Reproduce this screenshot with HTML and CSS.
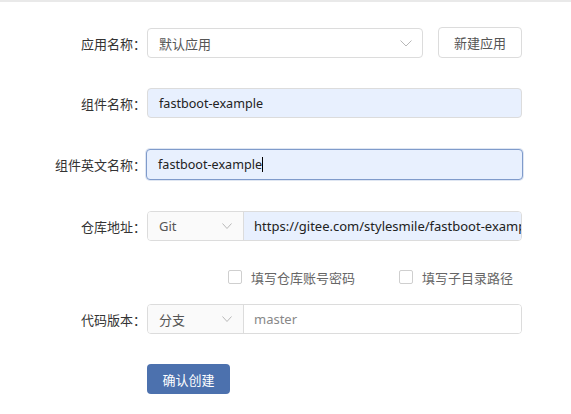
FILE: index.html
```html
<!DOCTYPE html>
<html lang="zh">
<head>
<meta charset="utf-8">
<link rel="stylesheet" href="styles.css">
</head>
<body>
<div class="page">
  <form class="form">
    <div class="row r1">
      <label class="label">应用名称：</label>
      <div class="select wide">
        <span class="sel-text">默认应用</span>
        <svg class="arrow" width="12" height="7" viewBox="0 0 12 7"><path d="M0.5 0.5 L6 6 L11.5 0.5" fill="none" stroke="#b8b8b8" stroke-width="1"/></svg>
      </div>
      <button type="button" class="btn">新建应用</button>
    </div>
    <div class="row r2">
      <label class="label">组件名称：</label>
      <div class="input filled">fastboot-example</div>
    </div>
    <div class="row r3">
      <label class="label">组件英文名称：</label>
      <div class="input filled focus">fastboot-example<span class="caret"></span></div>
    </div>
    <div class="row r4">
      <label class="label">仓库地址：</label>
      <div class="group">
        <div class="select small">
          <span class="sel-text">Git</span>
          <svg class="arrow" width="10" height="6" viewBox="0 0 10 6"><path d="M0.5 0.5 L5 5.5 L9.5 0.5" fill="none" stroke="#b8b8b8" stroke-width="1"/></svg>
        </div>
        <div class="gin filled"><span class="clip">https://gitee.com/stylesmile/fastboot-example</span></div>
      </div>
    </div>
    <div class="row checks">
      <label class="check"><span class="box"></span>填写仓库账号密码</label>
      <label class="check"><span class="box"></span>填写子目录路径</label>
    </div>
    <div class="row r6">
      <label class="label">代码版本：</label>
      <div class="group">
        <div class="select small">
          <span class="sel-text">分支</span>
          <svg class="arrow" width="10" height="6" viewBox="0 0 10 6"><path d="M0.5 0.5 L5 5.5 L9.5 0.5" fill="none" stroke="#b8b8b8" stroke-width="1"/></svg>
        </div>
        <div class="gin plain">master</div>
      </div>
    </div>
    <div class="row r7">
      <span class="label"></span>
      <button type="button" class="primary">确认创建</button>
    </div>
  </form>
</div>
</body>
</html>
```
FILE: styles.css
```css
* { box-sizing: border-box; }
html, body { margin: 0; padding: 0; background: #fff; }
body {
  font-family: "Noto Sans", "Noto Sans CJK SC", sans-serif;
  font-size: 13px;
  color: #333;
}
.page {
  border-top: 2px solid #e9e9e9;
  padding-top: 26px;
  width: 571px;
  height: 414px;
}
.form { display: flex; flex-direction: column; }
.row { display: flex; align-items: center; height: 30px; }
.r1 { margin-bottom: 30px; }
.r2 { margin-bottom: 31px; }
.r3 { margin-bottom: 32px; }
.r4 { margin-bottom: 26px; }
.checks { height: 20px; margin-bottom: 17px; padding-left: 228px; }
.r6 { margin-bottom: 30px; }

.label {
  width: 147px;
  flex: none;
  text-align: right;
  padding-right: 1px;
  color: #333;
  white-space: nowrap;
}
.select {
  display: flex;
  align-items: center;
  justify-content: space-between;
  height: 30px;
  border: 1px solid #dcdcdc;
  border-radius: 4px;
  padding: 0 10px 0 11px;
  color: #555;
  background: #fff;
}
.select.wide { width: 276px; }
.arrow { display: block; }
.btn {
  margin-left: 15px;
  width: 84px;
  height: 31px;
  margin-top: -1px;
  border: 1px solid #dcdcdc;
  border-radius: 4px;
  background: #fff;
  color: #555;
  font: inherit;
  padding: 0;
}
.input {
  width: 375px;
  height: 30px;
  border: 1px solid #dcdcdc;
  border-radius: 4px;
  padding: 0 11px;
  display: flex;
  align-items: center;
  color: #222;
  font-size: 12.6px;
}
.filled { background: #e8f0fe; }
.input.focus {
  width: 377px;
  margin-left: -1px;
  height: 31px;
  border-color: #7f9bcb;
  box-shadow: 0 0 0 1px rgba(127,155,203,0.25);
}
.caret {
  display: inline-block;
  width: 1px;
  height: 15px;
  background: #000;
}
.group {
  display: flex;
  width: 375px;
  height: 30px;
  border: 1px solid #dcdcdc;
  border-radius: 4px;
  overflow: hidden;
}
.select.small {
  width: 96px;
  height: 28px;
  border: none;
  border-right: 1px solid #dcdcdc;
  border-radius: 0;
  background: #fafafa;
  padding: 0 11px;
  flex: none;
}
.gin {
  flex: 1;
  min-width: 0;
  display: flex;
  align-items: center;
  padding: 0 0 0 10px;
  white-space: nowrap;
  overflow: hidden;
  color: #222;
}
.clip { display: block; overflow: hidden; width: 268px; }
.gin.plain { background: #fff; color: #888; }
.check {
  display: flex;
  align-items: center;
  color: #666;
  white-space: nowrap;
}
.check + .check { margin-left: 44px; }
.box {
  width: 14px;
  height: 14px;
  border: 1px solid #cfcfcf;
  border-radius: 2px;
  background: #fff;
  margin-right: 9px;
}
.primary {
  width: 83px;
  height: 30px;
  border: none;
  border-radius: 4px;
  background: #4c71ae;
  color: #fff;
  font: inherit;
  padding: 0;
}
```
